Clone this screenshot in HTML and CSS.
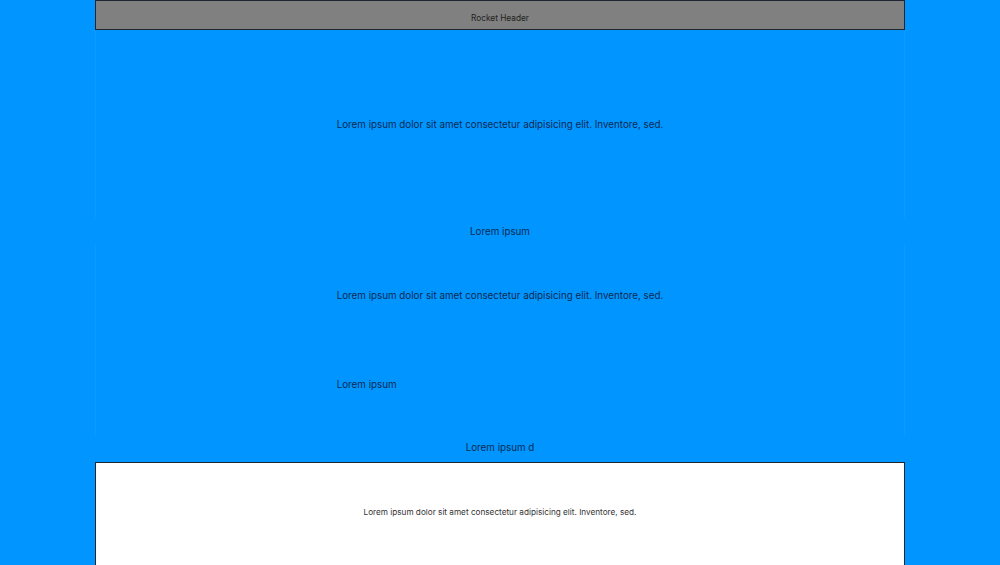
FILE: index.html
```html
<!DOCTYPE html>
<html>
<head>
<meta charset="utf-8">
<link rel="stylesheet" href="styles.css">
</head>
<body>
<div class="page">
  <header class="header">Rocket Header</header>
  <section class="hero">
    <p class="hero-text">Lorem ipsum dolor sit amet consectetur adipisicing elit. Inventore, sed.</p>
  </section>
  <div class="band">Lorem ipsum</div>
  <section class="main">
    <div class="main-inner">
      <p class="main-text">Lorem ipsum dolor sit amet consectetur adipisicing elit. Inventore, sed.</p>
      <p class="main-sub">Lorem ipsum</p>
    </div>
  </section>
  <div class="band band-2">Lorem ipsum d</div>
  <footer class="footer">
    <p class="footer-text">Lorem ipsum dolor sit amet consectetur adipisicing elit. Inventore, sed.</p>
  </footer>
</div>
</body>
</html>
```
FILE: styles.css
```css
html, body {
  margin: 0;
  padding: 0;
  background: #0095ff;
  height: 100%;
  overflow: hidden;
}
body {
  font-family: Inter, "Open Sans", sans-serif;
  color: #0a2a52;
}
p { margin: 0; }
.page {
  width: 810px;
  margin: 0 auto;
  display: flex;
  flex-direction: column;
}
.header {
  background: #808080;
  border: 1px solid #1d2530;
  display: flex;
  align-items: center;
  justify-content: center;
  padding-top: 6px;
  box-sizing: border-box;
  height: 30px;
  font-size: 8.3px;
  color: #222;
}
.hero {
  height: 188px;
  display: flex;
  align-items: center;
  justify-content: center;
  border-left: 1px solid rgba(255,255,255,0.05);
  border-right: 1px solid rgba(255,255,255,0.05);
  box-sizing: border-box;
}
.hero-text, .main-text, .main-sub {
  font-size: 9.8px;
}
.band {
  height: 27px;
  display: flex;
  align-items: center;
  justify-content: center;
  font-size: 9.8px;
  box-sizing: border-box;
}
.band-2 {
  padding-bottom: 2px;
}
.main {
  height: 190px;
  display: flex;
  justify-content: center;
  border-left: 1px solid rgba(255,255,255,0.05);
  border-right: 1px solid rgba(255,255,255,0.05);
}
.main-inner {
  padding-top: 45px;
  display: flex;
  flex-direction: column;
  gap: 78px;
}
.footer {
  height: 110px;
  background: #fff;
  border: 1px solid #1d2530;
  border-bottom: none;
  display: flex;
  justify-content: center;
  padding-top: 44px;
  box-sizing: border-box;
}
.footer-text {
  font-size: 8.2px;
  color: #333;
}
```
